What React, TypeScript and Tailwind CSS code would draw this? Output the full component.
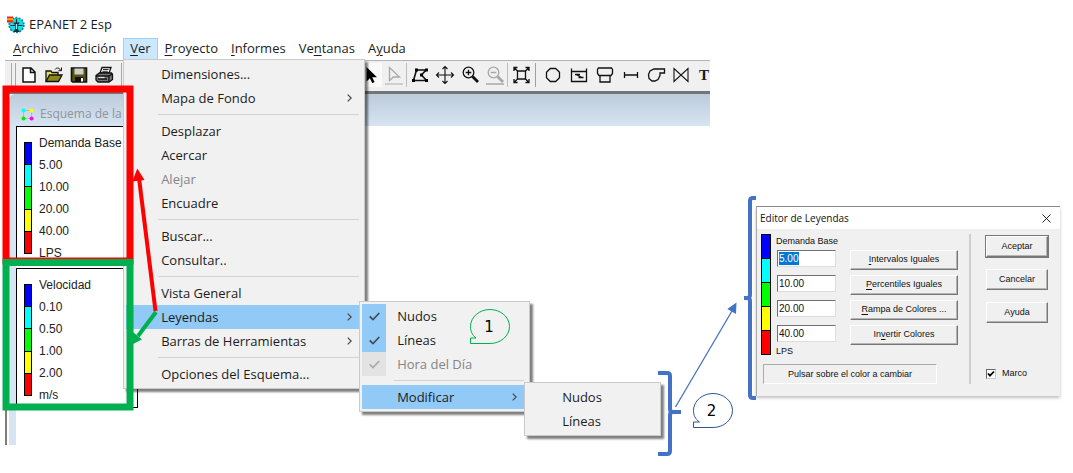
import React from "react";

const SEGMENTS = ["bg-[#0000ff]", "bg-[#00ffff]", "bg-[#00ff00]", "bg-[#ffff00]", "bg-[#ff0000]"];

function ColorScale({ className }: { className: string }) {
  return (
    <div className={"flex shrink-0 flex-col border border-black " + className}>
      {SEGMENTS.map((c) => (
        <div key={c} className={"flex-1 border-b border-black last:border-b-0 " + c} />
      ))}
    </div>
  );
}

function Legend({ labels, caption }: { labels: string[]; caption: string }) {
  return (
    <section aria-label={caption} className="flex h-[140px] w-[122px] gap-[7px] border border-black bg-white pt-[5px] pl-[7px] font-['Liberation_Sans',sans-serif] text-[12px] text-[#222]">
      <ColorScale className="mt-[10px] h-[112px] w-2" />
      <ul>
        {labels.map((l) => (
          <li key={l} className="h-[22px] leading-[22px] whitespace-nowrap">{l}</li>
        ))}
      </ul>
    </section>
  );
}

function Key({ text, at }: { text: string; at: number }) {
  return (
    <span>
      {text.slice(0, at)}
      <u className="underline-offset-2">{text[at]}</u>
      {text.slice(at + 1)}
    </span>
  );
}

function Chevron() {
  return (
    <svg className="h-2 w-[5px]" viewBox="0 0 5 8" fill="none" stroke="#444" strokeWidth="1.2">
      <path d="M.7.6 4.2 4 .7 7.4" />
    </svg>
  );
}

function MenuItem({ label, arrow, active, disabled }: { label: string; arrow?: boolean; active?: boolean; disabled?: boolean }) {
  return (
    <button
      type="button"
      role="menuitem"
      disabled={disabled}
      className={"flex h-6 w-full items-center justify-between pr-[10px] pl-[35px] text-left whitespace-nowrap " + (active ? "bg-[#91c9f7] " : "") + (disabled ? "text-[#858585]" : "")}
    >
      <span className="pt-px">{label}</span>
      {arrow && <Chevron />}
    </button>
  );
}

function MenuLine() {
  return (
    <div role="separator" className="flex h-[9px] items-center pr-[3px] pl-8">
      <div className="h-px w-full bg-[#d2d2d2]" />
    </div>
  );
}

function CheckItem({ label, disabled }: { label: string; disabled?: boolean }) {
  return (
    <button
      type="button"
      role="menuitemcheckbox"
      aria-checked="true"
      disabled={disabled}
      className={"flex h-6 w-full items-center gap-[11px] text-left whitespace-nowrap " + (disabled ? "text-[#858585]" : "")}
    >
      <span className={"flex h-6 w-6 items-center justify-center " + (disabled ? "bg-[#e3e3e3]" : "bg-[#91c9f7]")}>
        <svg className="h-[9px] w-[11px]" viewBox="0 0 11 9" fill="none" stroke={disabled ? "#aaa" : "#3f4a55"} strokeWidth="1.7">
          <path d="M.7 4.4 4 7.6 10.3 1" />
        </svg>
      </span>
      <span className="pt-px">{label}</span>
    </button>
  );
}

const MENU_BOX = "border border-[#cacaca] bg-[#f1f1f1] p-[2px] shadow-[3px_3px_2px_rgba(0,0,0,0.5)]";

function ViewMenu() {
  return (
    <div role="menu" aria-label="Ver" className={"absolute top-[21px] left-0 z-10 w-[242px] " + MENU_BOX}>
      <MenuItem label="Dimensiones..." />
      <MenuItem label="Mapa de Fondo" arrow />
      <MenuLine />
      <MenuItem label="Desplazar" />
      <MenuItem label="Acercar" />
      <MenuItem label="Alejar" disabled />
      <MenuItem label="Encuadre" />
      <MenuLine />
      <MenuItem label="Buscar..." />
      <MenuItem label="Consultar.." />
      <MenuLine />
      <MenuItem label="Vista General" />
      <div className="relative">
        <MenuItem label="Leyendas" arrow active />
        <div role="menu" aria-label="Leyendas" className={"absolute -top-[4px] left-[233px] w-[171px] " + MENU_BOX}>
          <CheckItem label="Nudos" />
          <CheckItem label="Líneas" />
          <CheckItem label="Hora del Día" disabled />
          <MenuLine />
          <div className="relative">
            <MenuItem label="Modificar" arrow active />
            <div role="menu" aria-label="Modificar" className={"absolute -top-[3px] left-[162px] w-[137px] " + MENU_BOX}>
              <MenuItem label="Nudos" />
              <MenuItem label="Líneas" />
            </div>
          </div>
        </div>
      </div>
      <MenuItem label="Barras de Herramientas" arrow />
      <MenuLine />
      <MenuItem label="Opciones del Esquema..." />
    </div>
  );
}

function Tool({ name, wide, className = "", children }: { name: string; wide?: boolean; className?: string; children: React.ReactNode }) {
  return (
    <button type="button" aria-label={name} className={"flex h-6 shrink-0 items-center justify-center " + (wide ? "w-[26px] " : "w-[25px] ") + className}>
      <svg className="h-5 w-5" viewBox="0 0 20 20" fill="none" stroke="#111" strokeWidth="1.3">{children}</svg>
    </button>
  );
}

function Toolbar() {
  return (
    <div role="toolbar" aria-label="Herramientas" className="flex h-[34px] overflow-hidden border-t border-b-[3px] border-t-[#b4b4b4] border-b-[#757575] bg-[#f0f0f0] pt-[2px]">
      <div className="ml-[6px] h-6 w-[5px] shrink-0 border-x border-[#a8a8a8]" />
      <Tool name="Nuevo">
        <path d="M4 3h8l4 4v10H4zM11.500 3v4.500H16" fill="#fff" strokeWidth="1.500" />
      </Tool>
      <Tool name="Abrir">
        <path d="M2 16V6h5l1 1.500h6V10" fill="#e3dd55" />
        <path d="M2 16.500 5.500 10H18l-3.500 6.500z" fill="#8a8718" />
        <path d="M11 4.500c1.500-2 4-2 5.500.5M17.500 2.500v3.200h-3" strokeWidth="1" />
      </Tool>
      <Tool name="Guardar">
        <path d="M2.500 3h15v14h-14l-1-1z" fill="#55550e" strokeWidth="1.600" />
        <path d="M5.500 3.500h9v6h-9z" fill="#cfcfcf" stroke="none" />
        <path d="M6 12h8.500v5H6z" fill="#111" stroke="none" />
        <path d="M12 13h2v3.500h-2z" fill="#fff" stroke="none" />
      </Tool>
      <Tool name="Imprimir" wide>
        <path d="m6 8 2-5.500h9L15 8z" fill="#fff" />
        <path d="M9 4.500h5.500M8.300 6.300h5.500" strokeWidth=".9" />
        <path d="M2 10.500 5.500 8h12l1 1.500v5L15 17H4l-2-2z" fill="#777" />
        <path d="M2 11h13l3.500-2M15 11v6M4 14h9" />
        <path d="M4.500 12.500h6" stroke="#ddd" />
      </Tool>
      <div className="ml-1 h-6 w-[5px] shrink-0 border-x border-[#a8a8a8]" />
      <div className="w-[231px] shrink-0" />
      <Tool name="Seleccionar objeto" className="bg-[#fafafa]">
        <path d="M6.500 2v14.500l3.400-3.200 2.400 5 2.300-1.200-2.400-4.800H17z" fill="#000" stroke="none" />
      </Tool>
      <Tool name="Seleccionar vértice" className="border-r border-[#bdbdbd]">
        <path d="M5.500 2.500v13l4-3.500h6z" stroke="#a8a8a8" />
        <path d="M1 19h18" stroke="#bbb" />
      </Tool>
      <Tool name="Seleccionar región">
        <path d="M6.500 5 16 5l-4.500 5 5 5.500h-13z" strokeWidth="1.600" />
        <path d="M5 3.500h3v3H5zM15 3.500h3v3h-3zM10 8.500h3v3h-3zM15 14h3v3h-3zM2 14h3v3H2z" fill="#000" stroke="none" />
      </Tool>
      <Tool name="Desplazar">
        <path d="M10 1.500v17M1.500 10h17M7.500 4 10 1.500 12.500 4M7.500 16l2.500 2.500 2.500-2.500M4 7.500 1.500 10 4 12.500M16 7.500l2.500 2.500-2.500 2.500" strokeWidth="1.100" />
      </Tool>
      <Tool name="Acercar" wide>
        <circle cx="8.500" cy="7.500" r="5.300" />
        <path d="M5.700 7.500h5.600M8.500 4.700v5.600" />
        <path d="m12.500 11.500 5.500 5.500" strokeWidth="2.800" />
      </Tool>
      <Tool name="Alejar" className="border-r border-[#bdbdbd]">
        <g stroke="#a8a8a8">
          <circle cx="8.500" cy="7.500" r="5.300" />
          <path d="M5.700 7.500h5.600M1 19h18" />
          <path d="m12.500 11.500 5.500 5.500" strokeWidth="2.800" />
        </g>
      </Tool>
      <Tool name="Encuadre" wide>
        <path d="M6.500 6h8v8h-8z" />
        <path d="M3 6V2.500h3.500M14.500 2.500H18V6M18 14v3.500h-3.500M6.500 17.500H3V14M3.500 3l3 3M17.500 3l-3 3M17.500 17l-3-3M3.500 17l3-3" />
      </Tool>
      <div className="mr-1 ml-px h-6 shrink-0 border-l border-[#a0a0a0]" />
      <Tool name="Conexión" wide>
        <path d="M7.300 3.500h5.400l3.800 3.800v5.400l-3.800 3.800H7.300l-3.800-3.800V7.300z" />
      </Tool>
      <Tool name="Embalse" wide>
        <path d="M2.500 3.500v13h15v-13M2.500 6.500h15M6 9.500h5M9.500 12.500h5M7 9.500l6 3" />
      </Tool>
      <Tool name="Depósito" wide>
        <path d="M3.500 3h13l1 1.500v4L16 10.500H4L2.500 8.500v-4zM5 10.500V17h10v-6.500" />
      </Tool>
      <Tool name="Tubería">
        <path d="M3.500 7v6M16.500 7v6M3.500 10h13" />
      </Tool>
      <Tool name="Bomba">
        <path d="M8 4h10.500v4H14v2.500l-2 4-3 1.500H6l-3-2.500-.5-4L4 6z" />
      </Tool>
      <Tool name="Válvula" wide>
        <path d="M3 3.500v13L17 3.500v13z" strokeWidth="1.100" />
      </Tool>
      <button type="button" className="h-6 flex-1 pr-px text-right font-['Liberation_Serif',serif] text-[15px] leading-6 font-bold">T</button>
    </div>
  );
}

function Logo() {
  return (
    <svg className="h-[18px] w-[18px]" viewBox="0 0 18 18">
      <circle cx="9.500" cy="9" r="7.300" fill="#19dce8" stroke="#0c8a98" strokeWidth="1.800" strokeDasharray="2 1.300" />
      <path d="M0 .5h6v6H0z" fill="#e02a1a" />
      <path d="M0 2.200h6v2H0z" fill="#f4a71d" />
      <path d="M6 6.500h7l-2 2.500v4l1.500 3H6.500L8 13V9z" fill="#17323c" />
      <path d="M3.500 9.500h12M9.500 3v4" stroke="#17323c" strokeWidth="1.200" />
      <path d="M8.800 8h1.400v5H8.800z" fill="#8eeef4" />
    </svg>
  );
}

function MainWindow() {
  return (
    <main className="flex min-w-0 flex-1 flex-col pb-7 font-['Open_Sans','Noto_Sans',sans-serif] text-[13px] text-[#1c1c1c]">
      <header className="flex h-[38px] items-center gap-1 pt-3 pl-[2px]">
        <Logo />
        <h1>EPANET 2 Esp</h1>
      </header>
      <nav className="flex h-[22px]">
        <button type="button" className="pr-[7px] pl-2"><Key text="Archivo" at={0} /></button>
        <button type="button" className="px-[7px]"><Key text="Edición" at={0} /></button>
        <div className="relative">
          <button type="button" aria-expanded="true" className="h-full border border-[#99d1ff] bg-[#cce8ff] px-[6px]"><Key text="Ver" at={0} /></button>
          <ViewMenu />
        </div>
        <button type="button" className="px-[7px]"><Key text="Proyecto" at={0} /></button>
        <button type="button" className="px-[6px]"><Key text="Informes" at={0} /></button>
        <button type="button" className="px-[7px]"><Key text="Ventanas" at={2} /></button>
        <button type="button" className="px-[6px]"><Key text="Ayuda" at={1} /></button>
      </nav>
      <Toolbar />
      <section aria-label="Esquema" className="flex-1 border-l-2 border-[#7d7d7d] pl-[2px]">
        <div className="flex h-8 items-center gap-[6px] rounded-tl-md bg-linear-to-b from-[#bccbda] to-[#d7e4f2] pt-2 pl-3 text-[#8f9499]">
          <svg className="h-[13px] w-[13px]" viewBox="0 0 13 13">
            <path d="M2.500 2.500h8v8h-8z" fill="none" stroke="#999" strokeDasharray="1 1" />
            <circle cx="2.500" cy="2.500" r="2" fill="#0ff" />
            <circle cx="10.500" cy="2.500" r="2" fill="#ff0" />
            <circle cx="2.500" cy="10.500" r="2" fill="#0e0" />
            <circle cx="10.500" cy="10.500" r="2" fill="#f0f" />
          </svg>
          <h2 className="text-[12px]">Esquema de la</h2>
        </div>
        <div className="flex h-[319px] flex-col gap-[2px] border-l-[7px] border-[#d7e4f2]">
          <Legend caption="Nudos" labels={["Demanda Base", "5.00", "10.00", "20.00", "40.00", "LPS"]} />
          <Legend caption="Líneas" labels={["Velocidad", "0.10", "0.50", "1.00", "2.00", "m/s"]} />
        </div>
      </section>
    </main>
  );
}

const PUSH = "w-full border border-t-white border-l-white border-r-[#777] border-b-[#777] bg-[#f0f0f0] shadow-[inset_-1px_-1px_0_#b5b5b5]";

function LegendEditor() {
  return (
    <aside role="dialog" aria-label="Editor de Leyendas" className="mt-[206px] w-[304px] shrink-0 self-start border-t border-l border-t-[#8a8a8a] border-l-[#aaa] bg-[#f0f0f0] font-['Liberation_Sans',sans-serif] text-[9px] text-[#111] shadow-[0_2px_3px_rgba(0,0,0,0.25)]">
      <div className="flex h-[22px] items-center justify-between bg-white pr-[9px] pl-[3px]">
        <h2 className="font-['Open_Sans','Noto_Sans',sans-serif] text-[10px]">Editor de Leyendas</h2>
        <button type="button" aria-label="Cerrar">
          <svg className="h-[9px] w-[9px]" viewBox="0 0 9 9" stroke="#222"><path d="m.5.5 8 8M8.500.5l-8 8" /></svg>
        </button>
      </div>
      <div className="flex pt-[5px] pr-3 pb-3 pl-1">
        <div className="flex w-[197px] flex-col">
          <div className="flex">
            <ColorScale className="h-[121px] w-[10px]" />
            <div className="ml-[5px] w-[60px]">
              <p className="h-4 leading-[14px] whitespace-nowrap">Demanda Base</p>
              <div className="flex flex-col gap-2 pl-px">
                <div className="flex h-[17px] border border-t-[#707070] border-l-[#707070] border-r-[#ddd] border-b-[#ddd] bg-white p-px">
                  <input aria-label="Intervalo 1" defaultValue="5.00" size={4} className="w-5 bg-[#0078d7] text-[10px] leading-3 text-white" />
                </div>
                {["10.00", "20.00", "40.00"].map((v) => (
                  <input key={v} aria-label={"Intervalo " + v} defaultValue={v} className="h-[17px] w-full border border-t-[#707070] border-l-[#707070] border-r-[#ddd] border-b-[#ddd] bg-white px-px text-[10px]" />
                ))}
              </div>
              <p className="h-[14px] leading-[18px]">LPS</p>
            </div>
            <div className="mt-4 ml-[14px] flex flex-1 flex-col gap-[5px]">
              <button type="button" className={"h-5 " + PUSH}><Key text="Intervalos Iguales" at={0} /></button>
              <button type="button" className={"h-5 " + PUSH}><Key text="Percentiles Iguales" at={0} /></button>
              <button type="button" className={"h-5 " + PUSH}><Key text="Rampa de Colores ..." at={0} /></button>
              <button type="button" className={"h-5 " + PUSH}><Key text="Invertir Colores" at={2} /></button>
            </div>
          </div>
          <p className="mt-2 ml-[2px] h-5 w-[174px] border border-t-[#aaa] border-l-[#aaa] border-r-white border-b-white text-center leading-[18px]">Pulsar sobre el color a cambiar</p>
        </div>
        <div className="ml-[11px] w-[2px] bg-[#cfcfcf]" />
        <div className="ml-[15px] flex flex-1 flex-col gap-3 pt-[2px]">
          <button type="button" className={"h-[21px] outline outline-[#777] " + PUSH}>Aceptar</button>
          <button type="button" className={"h-[21px] " + PUSH}>Cancelar</button>
          <button type="button" className={"h-[21px] " + PUSH}>Ayuda</button>
          <label className="mt-auto flex h-5 items-center gap-[6px]">
            <span className="relative h-[10px] w-[10px]">
              <input type="checkbox" defaultChecked className="block h-[10px] w-[10px] appearance-none border border-t-[#666] border-l-[#666] border-r-[#ccc] border-b-[#ccc] bg-white" />
              <svg className="pointer-events-none absolute inset-0" viewBox="0 0 10 10" fill="none" stroke="#000" strokeWidth="1.800"><path d="M2 4.500 4 6.700 8 2.500" /></svg>
            </span>
            Marco
          </label>
        </div>
      </div>
    </aside>
  );
}

function Annotations() {
  return (
    <svg className="pointer-events-none absolute top-0 left-0 z-20 h-[473px] w-[1073px]" viewBox="0 0 1073 473" fill="none">
      <rect x="6" y="89" width="124" height="172" stroke="#ff0000" strokeWidth="7" />
      <rect x="6" y="262.500" width="124" height="144.500" stroke="#00b050" strokeWidth="7" />
      <path d="M155.500 311 139 178" stroke="#ff0000" strokeWidth="4" />
      <path d="m137.300 168.500 7.200 11.500-12.200 1.500z" fill="#ff0000" />
      <path d="m156 312-18 24" stroke="#00b050" strokeWidth="4" />
      <path d="m131 345 2-13 9 7.500z" fill="#00b050" />
      <path d="M658 373h9q3 0 3 3v33q0 3 3 3h8h-8q-3 0-3 3v36q0 3-3 3h-9" stroke="#4472c4" strokeWidth="4" />
      <path d="M756 198h-3q-3 0-3 3v94q0 3-3 3h-3h3q3 0 3 3v94q0 3 3 3h3" stroke="#4472c4" strokeWidth="4" />
      <path d="M675.500 407 732 311" stroke="#4472c4" strokeWidth="1.300" />
      <path d="m736.500 302.500-.5 11.500-8.700-5z" fill="#4472c4" />
      <path d="M470.500 343.500v-5.500h5.500c-4-3-5.500-7-5.500-11.500 0-9.500 9-17 19.500-17s19.500 7.500 19.500 17-9 17-19.500 17z" stroke="#00b050" />
      <path d="M693.500 427.500V422h6c-4.500-3-6-7-6-11.500 0-9.500 9-17 19.500-17s19.500 7.500 19.500 17-9 17-19.500 17z" stroke="#2f5597" fill="#fff" />
      <g fill="#000" fontFamily="DejaVu Sans, sans-serif" fontSize="15" textAnchor="middle">
        <text x="489" y="332">1</text>
        <text x="711.500" y="416">2</text>
      </g>
    </svg>
  );
}

export default function App() {
  return (
    <div className="relative flex min-h-screen gap-[46px] bg-white pr-[13px] pl-[5px]">
      <MainWindow />
      <LegendEditor />
      <Annotations />
    </div>
  );
}
